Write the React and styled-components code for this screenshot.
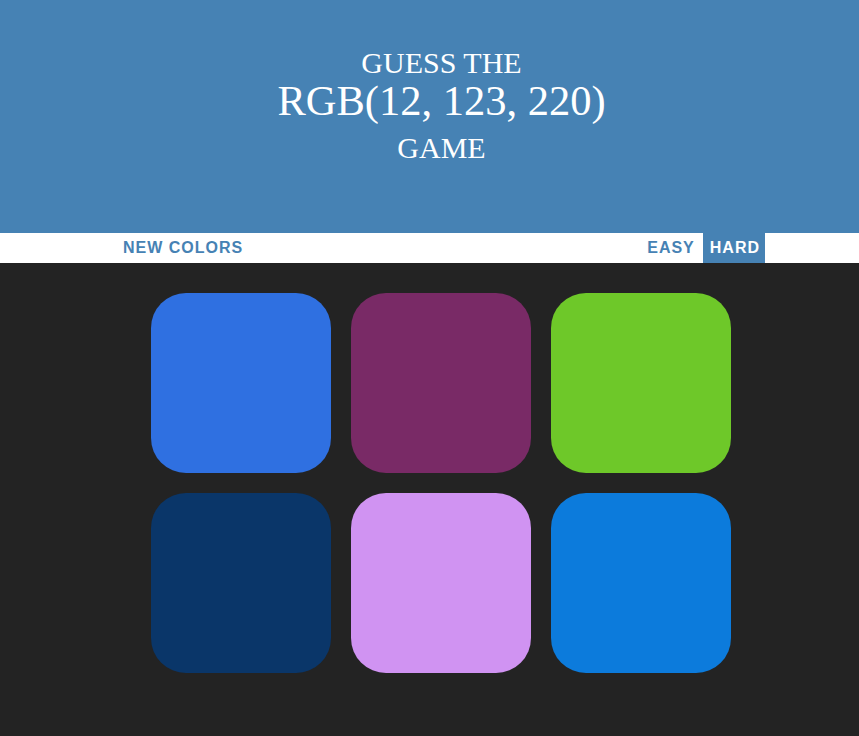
import React, { useState } from "react";
import styled, { createGlobalStyle } from "styled-components";

const GlobalStyle = createGlobalStyle`
  body {
    margin: 0;
    background: #232323;
    font-family: "Liberation Sans", Arial, sans-serif;
  }
`;

const Header = styled.h1`
  margin: 0;
  height: 233px;
  box-sizing: border-box;
  padding: 43px 0 0 24px;
  background: steelblue;
  color: #fff;
  text-align: center;
  font-family: "Liberation Serif", "Times New Roman", serif;
  font-weight: normal;
`;

const Line = styled.span`
  display: block;
  font-size: ${(p) => (p.big ? "42.5px" : "30px")};
  line-height: ${(p) => (p.big ? "36px" : "40px")};
  margin-top: ${(p) => p.gap || 0}px;
`;

const Stripe = styled.div`
  height: 30px;
  background: #fff;
  display: flex;
  align-items: stretch;
  gap: 3px;
  padding: 0 94px 0 116px;
`;

const Button = styled.button`
  border: none;
  background: ${(p) => (p.selected ? "steelblue" : "transparent")};
  color: ${(p) => (p.selected ? "#fff" : "steelblue")};
  font-family: "Liberation Sans", Arial, sans-serif;
  font-size: 16px;
  font-weight: bold;
  letter-spacing: 1px;
  text-transform: uppercase;
  padding: 0 5px 0 7px;
  height: 30px;
  cursor: pointer;
  outline: none;
`;

const Spacer = styled.div`
  flex: 1;
`;

const Board = styled.div`
  width: 600px;
  margin: 20px 0 0 141px;
  display: flex;
  flex-wrap: wrap;
`;

const Square = styled.div`
  width: 180px;
  height: 180px;
  margin: 10px;
  border-radius: 35px;
  background: ${(p) => p.color};
`;

const colors = [
  "rgb(47, 112, 225)",
  "rgb(121, 42, 102)",
  "rgb(110, 200, 41)",
  "rgb(10, 54, 105)",
  "rgb(208, 147, 242)",
  "rgb(12, 123, 220)",
];

export default function App() {
  const [mode, setMode] = useState("hard");
  const shown = mode === "hard" ? colors : colors.slice(0, 3);

  return (
    <>
      <GlobalStyle />
      <Header>
        <Line>GUESS THE</Line>
        <Line big>RGB(12, 123, 220)</Line>
        <Line gap={9}>GAME</Line>
      </Header>
      <Stripe>
        <Button>New Colors</Button>
        <Spacer />
        <Button selected={mode === "easy"} onClick={() => setMode("easy")}>Easy</Button>
        <Button selected={mode === "hard"} onClick={() => setMode("hard")}>Hard</Button>
      </Stripe>
      <Board>
        {shown.map((c, i) => (
          <Square key={i} color={c} />
        ))}
      </Board>
    </>
  );
}
